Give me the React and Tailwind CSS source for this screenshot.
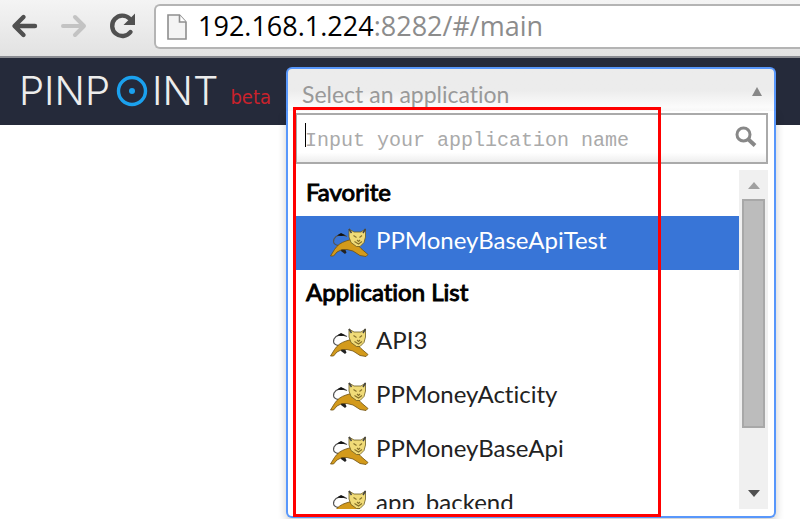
import { useState } from 'react';

const groups = [
    { label: 'Favorite', apps: ['PPMoneyBaseApiTest'] },
    { label: 'Application List', apps: ['API3', 'PPMoneyActicity', 'PPMoneyBaseApi', 'app_backend'] },
];

function TomcatIcon() {
    return (
        <svg viewBox="0 0 40 30" className="h-[30px] w-10 shrink-0" aria-hidden="true">
            {/* Tail */}
            <path d="M11 17.500C6 18 3.500 15 5 11C7 7 12 5.500 18 8.500" fill="none" stroke="#555" strokeWidth="1.200" />
            <path d="M8 7.500l4-2.500 5 2.500-5 .5z" fill="#111" />
            {/* Hind paw */}
            <path d="M11 19l1 4 4 3 1.500-1.500-2-5z" fill="#222" />
            {/* Body */}
            <path
                d="M1.500 28L5.500 21.500C8 17.500 12 14.500 17 13L22 11.500 28 16 32 20.500 39 26.500 37 28.500 31 27.500 24 23 18 21.500 13 21.500 8 24 4.500 28z"
                fill="#d39a1b"
                stroke="#6e5010"
                strokeWidth="0.800"
            />
            {/* Head */}
            <path
                d="M20 1L25 4H32L36.500 1 36.500 9 35 14.500 31 18.500 27.500 18.500 22 14.500 20 9z"
                fill="#f0db78"
                stroke="#6b5a20"
                strokeWidth="0.800"
            />
            <path d="M20 1l2.500 4M36.500 1L34 5" stroke="#444" strokeWidth="1.500" />
            <path d="M24.500 7.500l3 2M33 7.500L30.500 9.500M28 12l1.500 1.500 1.500-1.500M25.500 13.500l4 2.500 3.500-2.500" fill="none" stroke="#85702a" strokeWidth="1.100" />
        </svg>
    );
}

function BrowserBar() {
    return (
        <div className="flex h-[58px] items-start border-b-2 border-[#8a8c92] bg-linear-to-b from-[#f4f4f4] to-[#e2e2e2] pt-1 pl-[11px]">
            <button type="button" aria-label="Back" className="mt-[9px]">
                <svg width="27" height="26" viewBox="0 0 27 26" fill="none" stroke="#505050" strokeWidth="4.400">
                    <path d="M24 13H4M12.500 4L3.500 13l9 9" strokeLinejoin="round" strokeLinecap="round" />
                </svg>
            </button>
            <button type="button" aria-label="Forward" className="mt-[9px] ml-[22px]">
                <svg width="27" height="26" viewBox="0 0 27 26" fill="none" stroke="#c3c3c3" strokeWidth="4">
                    <path d="M3 13h20M15 4l9 9-9 9" strokeLinejoin="round" strokeLinecap="round" />
                </svg>
            </button>
            <button type="button" aria-label="Reload" className="mt-[9px] ml-[22px]">
                <svg width="28" height="26" viewBox="0 0 28 26">
                    <path d="M20.500 5.500A10.200 10.200 0 1 0 21.500 19" fill="none" stroke="#505050" strokeWidth="4.400" strokeLinecap="round" />
                    <path d="M26 .5V12H14.500z" fill="#505050" />
                </svg>
            </button>
            <div className="ml-[17px] flex h-[45px] flex-1 items-center rounded-l-md border-2 border-r-0 border-[#b4b4b4] bg-white pl-[11px]">
                <svg width="20" height="28" viewBox="0 0 20 28" className="shrink-0" aria-hidden="true">
                    <path d="M1 2h11.500l6.500 7v17H1z" fill="#f4f4f4" stroke="#8e8e8e" strokeWidth="1.600" />
                    <path d="M12.500 2v7H19" fill="#fff" stroke="#8e8e8e" strokeWidth="1.600" />
                </svg>
                <p className="ml-[11px] pb-[2px] font-['Open_Sans',sans-serif] text-[27px] leading-8 whitespace-nowrap text-[#8c8c8c]">
                    <span className="text-black">192.168.1.224</span>:8282/#/main
                </p>
            </div>
        </div>
    );
}

function Logo() {
    return (
        <a href="#/main" className="mt-[11px] ml-[19px] flex h-11 items-center font-[Inter,sans-serif] text-[40px] leading-[44px] font-light text-[#ececec]">
            PINP
            <svg width="32" height="32" viewBox="0 0 32 32" className="mr-1 ml-[6px]" aria-label="O">
                <circle cx="16" cy="16" r="13.500" fill="none" stroke="#1ba1ee" strokeWidth="3.400" />
                <circle cx="16" cy="16" r="3" fill="#1ba1ee" />
            </svg>
            INT
        </a>
    );
}

function ScrollBar() {
    return (
        <div className="flex w-[29px] shrink-0 flex-col items-center bg-[#f0f0f0]">
            <svg width="12" height="29" viewBox="0 0 12 29" aria-hidden="true">
                <path d="M0 19h12L6 12z" fill="#a0a0a0" />
            </svg>
            <div className="h-[229px] w-[23px] border-2 border-[#a8a8a8] bg-[#bcbcbc]" />
            <svg width="12" height="28" viewBox="0 0 12 28" className="mt-auto" aria-hidden="true">
                <path d="M0 9h12l-6 7z" fill="#505050" />
            </svg>
        </div>
    );
}

function ApplicationSelect() {
    const [selected, setSelected] = useState('PPMoneyBaseApiTest');

    return (
        <div className="relative mt-[9px] mr-6 flex-1 font-[Lato,sans-serif] [font-variant-ligatures:none]">
            <button
                type="button"
                className="flex h-11 w-full items-center justify-between rounded-t-md border-2 border-b-0 border-[#5897fb] bg-linear-to-b from-[#ececec] from-50% to-white pt-2 pr-3 pl-[14px] text-[23px] text-[#999]"
            >
                Select an application
                <svg width="10" height="10" viewBox="0 0 10 10" className="mb-1" aria-hidden="true">
                    <path d="M0 9h10L5 0z" fill="#888" />
                </svg>
            </button>

            <div className="absolute inset-x-0 top-full rounded-b-md border-2 border-t-0 border-[#5897fb] bg-white pt-[2px] pr-[6px] pb-[7px] pl-[7px] text-[24px] shadow-[0_4px_8px_rgba(0,0,0,0.2)]">
                {/* Search box */}
                <div className="relative flex h-[51px] items-center border-2 border-[#aaa] bg-linear-to-b from-white from-80% to-[#eee] pr-2 pl-2">
                    <input
                        type="text"
                        aria-label="Application name"
                        placeholder="Input your application name"
                        className="min-w-0 flex-1 bg-transparent pt-1 font-['Liberation_Mono',monospace] text-[20px] outline-none placeholder:text-[#aaa]"
                    />
                    <span className="absolute top-2 left-2 h-6 w-px bg-black" />
                    <svg width="24" height="24" viewBox="0 0 24 24" className="mb-1" fill="none" stroke="#888" aria-hidden="true">
                        <circle cx="9.500" cy="9.500" r="6.500" strokeWidth="3" />
                        <path d="M14.500 14.500l6.500 6" strokeWidth="4" />
                    </svg>
                </div>

                {/* Results */}
                <div className="mt-[6px] flex h-[339px] overflow-hidden">
                    <div className="min-w-0 flex-1">
                        {groups.map((group) => (
                            <section key={group.label}>
                                <h2 className="h-[46px] pl-[11px] leading-[44px] text-black [-webkit-text-stroke:1px_black]">{group.label}</h2>
                                <ul>
                                    {group.apps.map((app) => (
                                        <li key={app}>
                                            <button
                                                type="button"
                                                onClick={() => setSelected(app)}
                                                className={`flex h-[54px] w-full items-center pl-[34px] ${app === selected ? 'bg-[#3875d7] text-white' : 'text-[#222]'}`}
                                            >
                                                <TomcatIcon />
                                                <span className="ml-[7px] pb-[6px]">{app}</span>
                                            </button>
                                        </li>
                                    ))}
                                </ul>
                            </section>
                        ))}
                    </div>
                    <ScrollBar />
                </div>

                {/* Highlight frame */}
                <div className="pointer-events-none absolute -top-1 right-[113px] -bottom-px left-[5px] border-3 border-[#f00]" />
            </div>
        </div>
    );
}

export default function App() {
    return (
        <div className="min-h-screen overflow-hidden bg-white">
            <BrowserBar />
            <header className="flex h-[67px] items-start bg-[#252a3a]">
                <div className="flex w-[286px] shrink-0">
                    <Logo />
                    <span className="mt-[25px] ml-3 font-['DejaVu_Sans_Condensed','DejaVu_Sans',sans-serif] text-[20px] leading-7 text-[#c9222c]">beta</span>
                </div>
                <ApplicationSelect />
            </header>
        </div>
    );
}
